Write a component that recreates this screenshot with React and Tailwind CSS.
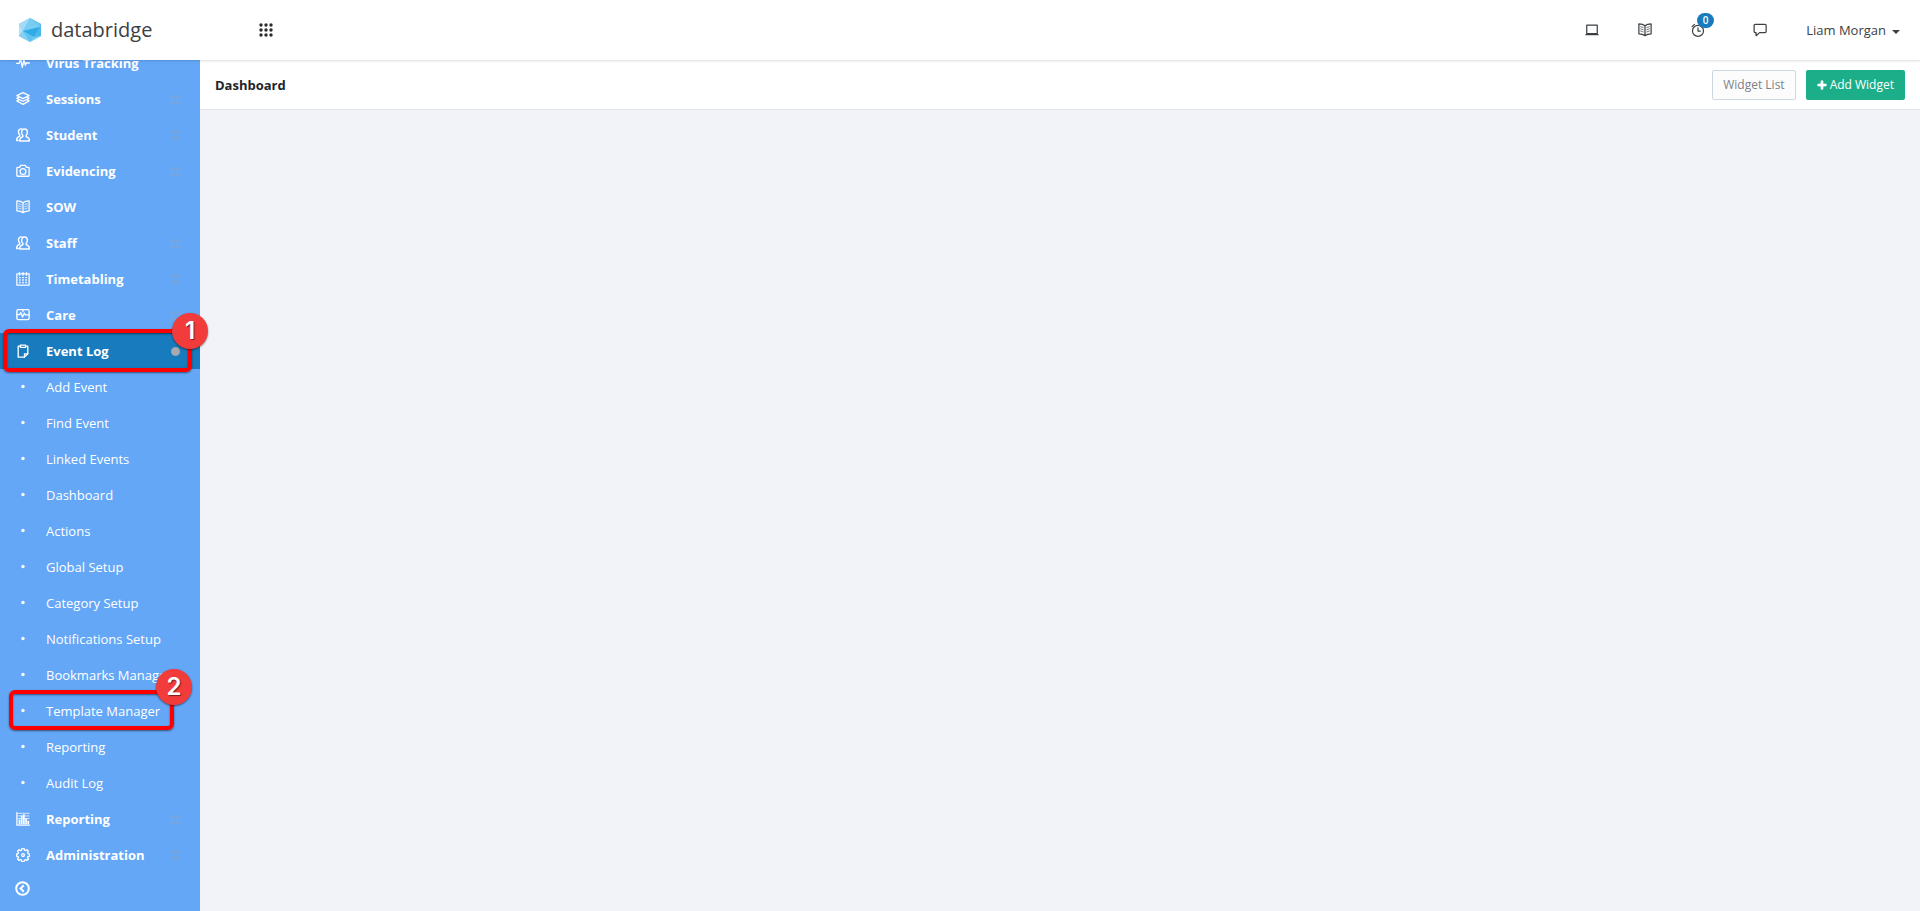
import React from 'react';
import { FaPlus } from 'react-icons/fa';

function Icon({ children, width = 1.5 }) {
  return (
    <svg
      viewBox="0 0 16 16"
      className="size-3.5 shrink-0"
      fill="none"
      stroke="currentColor"
      strokeWidth={width}
      strokeLinejoin="round"
      strokeLinecap="round"
      aria-hidden="true"
    >
      {children}
    </svg>
  );
}

const PulseIcon = () => (
  <Icon>
    <path d="M.7 8.5h2.8L5.2 3l2 10 1.9-8.5 1.6 6 1-2.5h3.6" />
  </Icon>
);

const LayersIcon = () => (
  <Icon>
    <path d="M8 .8 15 4.200 8 7.600 1 4.200z" />
    <path d="M3 6.200 1 7.200l7 3.400 7-3.400-2-1" />
    <path d="M3 9.200 1 10.200l7 3.900 7-3.900-2-1" />
  </Icon>
);

const UsersIcon = () => (
  <Icon width={1.6}>
    <path d="M9.700 1.200c2.100 0 3.300 1.600 3.300 3.600 0 1.800-.7 3.100-1.400 3.800v1.200c1.800.7 3.600 1.600 3.600 3.600v1.400H4.300v-1.400c0-2 1.800-2.900 3.600-3.600V8.600c-.8-.7-1.500-2-1.500-3.800 0-2 1.200-3.600 3.300-3.600z" />
    <path d="M7 1.200C6.600 1 6.200 1 5.800 1 3.900 1 2.800 2.500 2.800 4.400c0 1.700.7 3 1.500 3.700v1.300C2.500 10.200.8 11 .8 13v1.300h1.700" />
  </Icon>
);

const CameraIcon = () => (
  <Icon>
    <path d="M1.800 3.800h2.500L5.400 1.500h5.200l1.100 2.300h2.500c.5 0 .8.300.8.800v8.600c0 .5-.3.800-.8.800H1.800c-.5 0-.8-.3-.8-.8V4.600c0-.5.300-.8.800-.8z" />
    <circle cx="8" cy="8.600" r="3.300" />
  </Icon>
);

const BookIcon = () => (
  <Icon width={1.4}>
    <path d="M8 3.200C6.300 1.700 3.800 1 1 1v11.400c2.800 0 5.300.6 7 2.100 1.700-1.500 4.200-2.100 7-2.100V1c-2.800 0-5.300.7-7 2.200zm0 0v11.300" />
    <path
      d="M3 4.200l3 1M3 6.700l3 1M3 9.200l3 1M13 4.200l-3 1M13 6.700l-3 1M13 9.200l-3 1"
      strokeWidth=".8"
    />
  </Icon>
);

const CalendarIcon = () => (
  <Icon width={1.4}>
    <path d="M1 2.200h14v12.800H1zM4 .6v3M8 .6v3M12 .6v3" />
    <path
      d="M3.500 6.400h9M3.500 9.200h9M3.500 12h9"
      strokeWidth="1.600"
      strokeDasharray="1.800 1.800"
      strokeLinecap="butt"
    />
  </Icon>
);

const MonitorIcon = () => (
  <Icon>
    <rect x="1" y="1.800" width="14" height="11.500" rx="1.500" />
    <path d="M1 7.500h3l1.500-2.200 2 5 2-4.500 1.200 2H15M8 2v2" />
  </Icon>
);

const ClipboardIcon = () => (
  <Icon width={1.5}>
    <path d="M5 2.500H2.500V15h7.200l3.800-3.800V2.500H11" />
    <path d="M5 1.200h6v2.600H5zM9.700 15v-3.800h3.800" />
  </Icon>
);

const ChartIcon = () => (
  <Icon width={1.4}>
    <path d="M1 .8v14.200h14.400" />
    <path
      d="M4 14V8.500M6.500 14V4M9 14V2.500M11.500 14V7M14 14v-4"
      strokeWidth="1.900"
      strokeLinecap="butt"
    />
    <path d="M2 1.500h13M2 4.500h13M2 7.500h13" strokeWidth=".8" />
  </Icon>
);

const GearIcon = () => (
  <Icon>
    <path d="M6.700 .6h2.600l.4 1.900 1.100.5 1.700-1 1.700 1.700-1 1.700.5 1.100 1.900.4v2.400l-1.900.4-.5 1.100 1 1.700-1.700 1.700-1.700-1-1.100.5-.4 1.900H6.700l-.4-1.900-1.100-.5-1.700 1-1.700-1.700 1-1.700-.5-1.100L.6 9.300V6.900l1.700-.4.5-1.100-1-1.700 1.700-1.700 1.700 1 1.100-.5z" />
    <circle cx="8" cy="8.100" r="1.600" />
  </Icon>
);

const BulletIcon = () => (
  <svg viewBox="0 0 14 14" className="size-3.5 shrink-0" fill="currentColor" aria-hidden="true">
    <circle cx="7" cy="6.500" r="1.700" />
  </svg>
);

const ScreenIcon = () => (
  <Icon width={1.4}>
    <path d="M2 2.500h12v9.500H2zM1 13.200h14" />
  </Icon>
);

const AlarmIcon = () => (
  <Icon width={1.4}>
    <circle cx="8" cy="9" r="6.300" />
    <path d="M8 5.500v3.700h2.700M1.300 4.200 4 1.500M12 1.500l2.700 2.700" />
  </Icon>
);

const ChatIcon = () => (
  <Icon width={1.4}>
    <path d="M2.500 1.500h11.300c.7 0 1.200.5 1.200 1.200v7.100c0 .7-.5 1.200-1.200 1.200H7.500L3.500 14.500V11h-1c-.7 0-1.200-.5-1.200-1.200V2.700c0-.7.5-1.200 1.200-1.200z" />
  </Icon>
);

function Logo() {
  return (
    <svg viewBox="0 0 24 26" className="h-[26px] w-6" aria-hidden="true">
      <path d="M12 1 23 7v12L12 25 1 19V7z" fill="#5fc0ee" />
      <path d="M12 1 1 7l4 7z" fill="#a3dbf6" />
      <path d="M1 7v12l4-5z" fill="#b5e1f7" />
      <path d="M12 1 5 14l17-4z" fill="#7accf2" />
      <path d="M12 1l10 9 1-3z" fill="#6cc6f0" />
      <path d="M22 10 5 14l11 6z" fill="#2fabe6" />
      <path d="M5 14l-4 5 11 6z" fill="#86d0f3" />
      <path d="M5 14l11 6-4 5z" fill="#62c2ef" />
      <path d="M22 10l-6 10 7-1V7z" fill="#4cb7ea" />
      <path d="M16 20l-4 5 11-6z" fill="#78ccf1" />
    </svg>
  );
}

const MENU = [
  { label: 'Virus Tracking', icon: PulseIcon },
  { label: 'Sessions', icon: LayersIcon, expandable: true },
  { label: 'Student', icon: UsersIcon, expandable: true },
  { label: 'Evidencing', icon: CameraIcon, expandable: true },
  { label: 'SOW', icon: BookIcon },
  { label: 'Staff', icon: UsersIcon, expandable: true },
  { label: 'Timetabling', icon: CalendarIcon, expandable: true },
  { label: 'Care', icon: MonitorIcon, expandable: true },
  {
    label: 'Event Log',
    icon: ClipboardIcon,
    expandable: true,
    step: 1,
    children: [
      { label: 'Add Event' },
      { label: 'Find Event' },
      { label: 'Linked Events' },
      { label: 'Dashboard' },
      { label: 'Actions' },
      { label: 'Global Setup' },
      { label: 'Category Setup' },
      { label: 'Notifications Setup' },
      { label: 'Bookmarks Manager' },
      { label: 'Template Manager', step: 2 },
      { label: 'Reporting' },
      { label: 'Audit Log' },
    ],
  },
  { label: 'Reporting', icon: ChartIcon, expandable: true },
  { label: 'Administration', icon: GearIcon, expandable: true },
];

// Red outline with a numbered badge on its top right corner
const STEP_BOX = {
  1: 'left-[3px] right-2 -top-1 -bottom-[3px]',
  2: 'left-[9px] right-[26px] -top-[3px] -bottom-px',
};

const STEP_BADGE = {
  1: '-top-5 -right-5',
  2: '-top-[25px] -right-[22px]',
};

function Step({ number }) {
  return (
    <div
      className={`pointer-events-none absolute z-10 rounded-md border-4 border-[#fe0000] shadow-[0_1px_2px_rgba(0,0,0,0.5),inset_0_1px_2px_rgba(0,0,0,0.5)] ${STEP_BOX[number]}`}
    >
      <span
        className={`absolute flex size-9 items-center justify-center rounded-full bg-[#f23c3c] font-['Inter',sans-serif] text-2xl font-semibold text-white shadow-[0_1px_2px_rgba(0,0,0,0.5)] [text-shadow:1px_1px_1px_rgba(0,0,0,0.5)] ${STEP_BADGE[number]}`}
      >
        {number}
      </span>
    </div>
  );
}

function MenuItem({ label, icon: ItemIcon, expandable, step, children }) {
  return (
    <li>
      <div className="relative">
        <a
          href="#"
          className={`flex h-9 items-center pl-4 pr-5 font-bold ${children ? 'bg-[#187bbd]' : ''}`}
        >
          <ItemIcon />
          <span className="ml-4 grow whitespace-nowrap pt-0.5">{label}</span>
          {expandable && (
            <span
              className={`size-[9px] rounded-full border ${
                children ? 'border-[#a7aaae] bg-[#a7aaae]' : 'border-[#8ea5c2]'
              }`}
            />
          )}
        </a>
        {step && <Step number={step} />}
      </div>
      {children && (
        <ul>
          {children.map((child) => (
            <li key={child.label} className="relative">
              <a href="#" className="flex h-9 items-center pl-4 pr-5">
                <BulletIcon />
                <span className="ml-4 whitespace-nowrap pt-0.5">{child.label}</span>
              </a>
              {child.step && <Step number={child.step} />}
            </li>
          ))}
        </ul>
      )}
    </li>
  );
}

function Header() {
  return (
    <header className="relative z-20 flex h-[60px] shrink-0 items-center bg-white pl-[18px] pr-5 shadow-[0_1px_2px_rgba(0,0,0,0.15)]">
      <a href="#" className="flex w-[241px] items-center gap-[9px] text-xl text-[#3c4043]">
        <Logo />
        databridge
      </a>
      <button type="button" aria-label="Apps" className="text-[#2b2b2b]">
        <svg viewBox="0 0 14 14" className="size-3.5" fill="currentColor">
          {[2, 7, 12].map((y) =>
            [2, 7, 12].map((x) => <circle key={`${x}-${y}`} cx={x} cy={y} r="1.700" />)
          )}
        </svg>
      </button>
      <nav className="ml-auto flex items-center text-[#3c4043]">
        <button type="button" aria-label="Screen" className="mr-[39px]">
          <ScreenIcon />
        </button>
        <button type="button" aria-label="Library" className="mr-[39px]">
          <BookIcon />
        </button>
        <button type="button" aria-label="Reminders" className="relative mr-12">
          <AlarmIcon />
          <span className="absolute -top-2.5 left-1.5 flex h-[15px] w-[17px] items-center justify-center rounded-full bg-[#187bbd] text-[10px] font-semibold text-white">
            0
          </span>
        </button>
        <button type="button" aria-label="Messages" className="mr-[39px]">
          <ChatIcon />
        </button>
        <button type="button" className="flex items-center gap-1.5 pt-0.5 text-[13px]">
          Liam Morgan
          <span className="mt-0.5 border-x-4 border-t-4 border-x-transparent border-t-current" />
        </button>
      </nav>
    </header>
  );
}

export default function App() {
  return (
    <div className="flex h-screen flex-col overflow-hidden bg-[#f2f3f8] font-['Open_Sans',sans-serif] text-[13px]">
      <Header />
      <div className="flex min-h-0 grow">
        <aside className="flex w-[200px] shrink-0 flex-col justify-end bg-[#64a7f7] text-white">
          <ul className="shrink-0">
            {MENU.map((item) => (
              <MenuItem key={item.label} {...item} />
            ))}
          </ul>
          <div className="flex h-[38px] shrink-0 items-start pl-[15px] pt-2">
            <button type="button" aria-label="Collapse menu">
              <svg
                viewBox="0 0 15 15"
                className="size-[15px]"
                fill="none"
                stroke="currentColor"
                strokeWidth="2"
              >
                <circle cx="7.500" cy="7.500" r="6.300" />
                <path d="M8.800 4.300 5.600 7.500l3.200 3.200" />
              </svg>
            </button>
          </div>
        </aside>
        <main className="min-w-0 grow">
          <div className="flex h-[50px] items-center border-b border-[#e1e4ea] bg-white px-[15px]">
            <h1 className="grow pt-0.5 font-bold text-[#212529]">Dashboard</h1>
            <div className="flex gap-2.5 text-xs">
              <button
                type="button"
                className="h-[30px] rounded-xs border border-[#cfd8e0] bg-[#fcfcfc] px-2.5 text-[#7b828a]"
              >
                Widget List
              </button>
              <button
                type="button"
                className="flex h-[30px] items-center gap-[3px] rounded-xs bg-[#1bae89] px-[11px] text-white"
              >
                <FaPlus className="size-2.5" stroke="currentColor" strokeWidth="40" />
                Add Widget
              </button>
            </div>
          </div>
        </main>
      </div>
    </div>
  );
}
